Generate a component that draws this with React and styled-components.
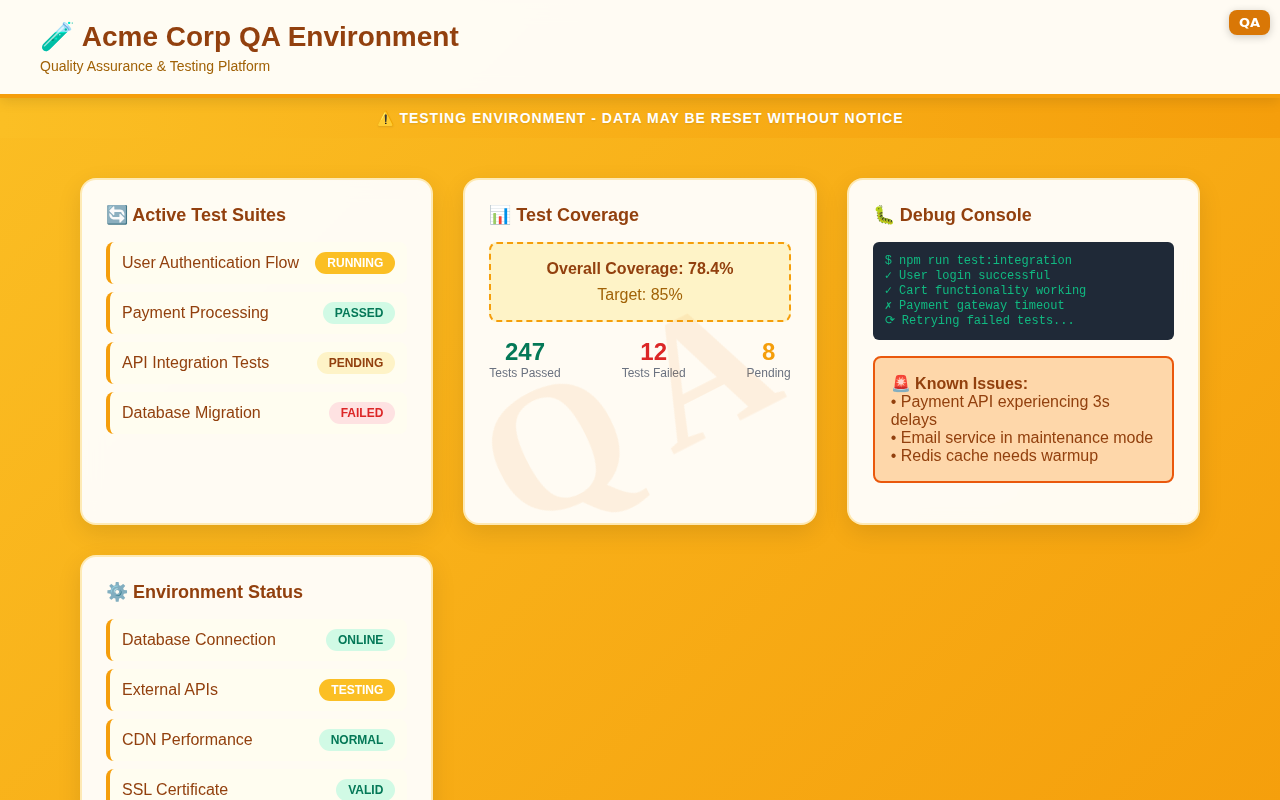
import React from "react";
import styled, { createGlobalStyle } from "styled-components";

const suites = [
  { name: "User Authentication Flow", status: "RUNNING", kind: "running" },
  { name: "Payment Processing", status: "PASSED", kind: "passed" },
  { name: "API Integration Tests", status: "PENDING", kind: "pending" },
  { name: "Database Migration", status: "FAILED", kind: "failed" },
];

const environment = [
  { name: "Database Connection", status: "ONLINE", kind: "passed" },
  { name: "External APIs", status: "TESTING", kind: "running" },
  { name: "CDN Performance", status: "NORMAL", kind: "passed" },
  { name: "SSL Certificate", status: "VALID", kind: "passed" },
];

const badgeColors = {
  running: { bg: "#fbbf24", fg: "#ffffff" },
  passed: { bg: "#d1fae5", fg: "#047857" },
  pending: { bg: "#fef3c7", fg: "#92400e" },
  failed: { bg: "#fee2e2", fg: "#dc2626" },
};

const StatusList = ({ items }) => (
  <List>
    {items.map((item) => (
      <Item key={item.name}>
        <span>{item.name}</span>
        <Badge $kind={item.kind}>{item.status}</Badge>
      </Item>
    ))}
  </List>
);

const App = () => {
  return (
    <>
      <GlobalStyle />
      <Watermark>QA</Watermark>
      <Corner>QA</Corner>
      <Header>
        <Title>🧪 Acme Corp QA Environment</Title>
        <Subtitle>Quality Assurance &amp; Testing Platform</Subtitle>
      </Header>
      <Banner>⚠️ TESTING ENVIRONMENT - DATA MAY BE RESET WITHOUT NOTICE</Banner>
      <Main>
        <Card>
          <CardTitle>🔄 Active Test Suites</CardTitle>
          <StatusList items={suites} />
        </Card>
        <Card>
          <CardTitle>📊 Test Coverage</CardTitle>
          <Coverage>
            <strong>Overall Coverage: 78.4%</strong>
            <Target>Target: 85%</Target>
          </Coverage>
          <Stats>
            <Stat>
              <StatValue $color="#047857">247</StatValue>
              <StatLabel>Tests Passed</StatLabel>
            </Stat>
            <Stat>
              <StatValue $color="#dc2626">12</StatValue>
              <StatLabel>Tests Failed</StatLabel>
            </Stat>
            <Stat>
              <StatValue $color="#f59e0b">8</StatValue>
              <StatLabel>Pending</StatLabel>
            </Stat>
          </Stats>
        </Card>
        <Card>
          <CardTitle>🐛 Debug Console</CardTitle>
          <Console>
            <div>$ npm run test:integration</div>
            <div>✓ User login successful</div>
            <div>✓ Cart functionality working</div>
            <div>✗ Payment gateway timeout</div>
            <div>⟳ Retrying failed tests...</div>
          </Console>
          <Issues>
            <strong>🚨 Known Issues:</strong>
            <br />• Payment API experiencing 3s delays
            <br />• Email service in maintenance mode
            <br />• Redis cache needs warmup
          </Issues>
        </Card>
        <Card>
          <CardTitle>⚙️ Environment Status</CardTitle>
          <StatusList items={environment} />
        </Card>
      </Main>
    </>
  );
};

export default App;

const GlobalStyle = createGlobalStyle`
  * {
    box-sizing: border-box;
  }
  body {
    margin: 0;
    min-height: 100vh;
    font-family: "Liberation Sans", Arial, sans-serif;
    background: linear-gradient(135deg, #fbbf24 0%, #f59e0b 100%);
    color: #92400e;
  }
`;

const Watermark = styled.div`
  position: fixed;
  top: 50%;
  left: 50%;
  margin-top: 3px;
  transform: translate(-50%, -50%) rotate(-27deg);
  font-family: "Liberation Serif", "Times New Roman", serif;
  font-size: 180px;
  font-weight: 900;
  letter-spacing: 30px;
  color: rgba(234, 120, 6, 0.09);
  pointer-events: none;
  z-index: 5;
`;

const Corner = styled.div`
  position: fixed;
  top: 10px;
  right: 10px;
  padding: 5px 10px;
  background: #d97706;
  color: #ffffff;
  font-family: "DejaVu Sans", sans-serif;
  font-size: 13px;
  font-weight: bold;
  border-radius: 8px;
  box-shadow: 0 2px 8px rgba(0, 0, 0, 0.2);
  z-index: 10;
`;

const Header = styled.header`
  position: relative;
  height: 98px;
  padding: 20px 40px;
  background: rgba(255, 255, 255, 0.95);
  backdrop-filter: blur(10px);
  border-bottom: 4px solid #f59e0b;
  box-shadow: 0 4px 12px rgba(0, 0, 0, 0.1);
`;

const Title = styled.h1`
  margin: 0;
  font-size: 28px;
  font-weight: bold;
  color: #92400e;
`;

const Subtitle = styled.p`
  margin: 5px 0 0;
  font-size: 14px;
  color: #a16207;
`;

const Banner = styled.div`
  padding: 12px;
  background: linear-gradient(90deg, #fbbf24, #f59e0b);
  color: #ffffff;
  font-size: 14px;
  font-weight: bold;
  letter-spacing: 1px;
  text-align: center;
  text-shadow: 0 1px 2px rgba(0, 0, 0, 0.1);
`;

const Main = styled.main`
  display: grid;
  grid-template-columns: repeat(3, 1fr);
  gap: 30px;
  max-width: 1200px;
  margin: 0 auto;
  padding: 40px;
`;

const Card = styled.section`
  padding: 24px;
  background: rgba(255, 255, 255, 0.95);
  backdrop-filter: blur(10px);
  border: 2px solid rgba(251, 191, 36, 0.3);
  border-radius: 16px;
  box-shadow: 0 8px 24px rgba(0, 0, 0, 0.1);
`;

const CardTitle = styled.h2`
  margin: 0 0 16px;
  font-size: 18px;
  font-weight: bold;
  color: #92400e;
`;

const List = styled.div`
  display: flex;
  flex-direction: column;
  gap: 8px;
`;

const Item = styled.div`
  display: flex;
  justify-content: space-between;
  align-items: center;
  padding: 10px 12px;
  background: #fffdf0;
  border-left: 4px solid #f59e0b;
  border-radius: 8px;
  font-size: 16px;
`;

const Badge = styled.span`
  padding: 4px 12px;
  border-radius: 12px;
  font-size: 12px;
  font-weight: bold;
  background: ${(props) => badgeColors[props.$kind].bg};
  color: ${(props) => badgeColors[props.$kind].fg};
`;

const Coverage = styled.div`
  padding: 16px;
  background: #fef3c7;
  border: 2px dashed #f59e0b;
  border-radius: 8px;
  font-size: 16px;
  text-align: center;
`;

const Target = styled.div`
  margin-top: 8px;
  color: #a16207;
`;

const Stats = styled.div`
  display: flex;
  justify-content: space-between;
  margin-top: 16px;
`;

const Stat = styled.div`
  text-align: center;
`;

const StatValue = styled.div`
  font-size: 24px;
  font-weight: bold;
  color: ${(props) => props.$color};
`;

const StatLabel = styled.div`
  font-size: 12px;
  color: #6b7280;
`;

const Console = styled.div`
  padding: 12px;
  background: #1f2937;
  border-radius: 6px;
  color: #10b981;
  font-family: "Liberation Mono", "Courier New", monospace;
  font-size: 12px;
`;

const Issues = styled.div`
  margin: 16px 0;
  padding: 16px;
  background: #fed7aa;
  border: 2px solid #ea580c;
  border-radius: 8px;
  font-size: 16px;
`;
